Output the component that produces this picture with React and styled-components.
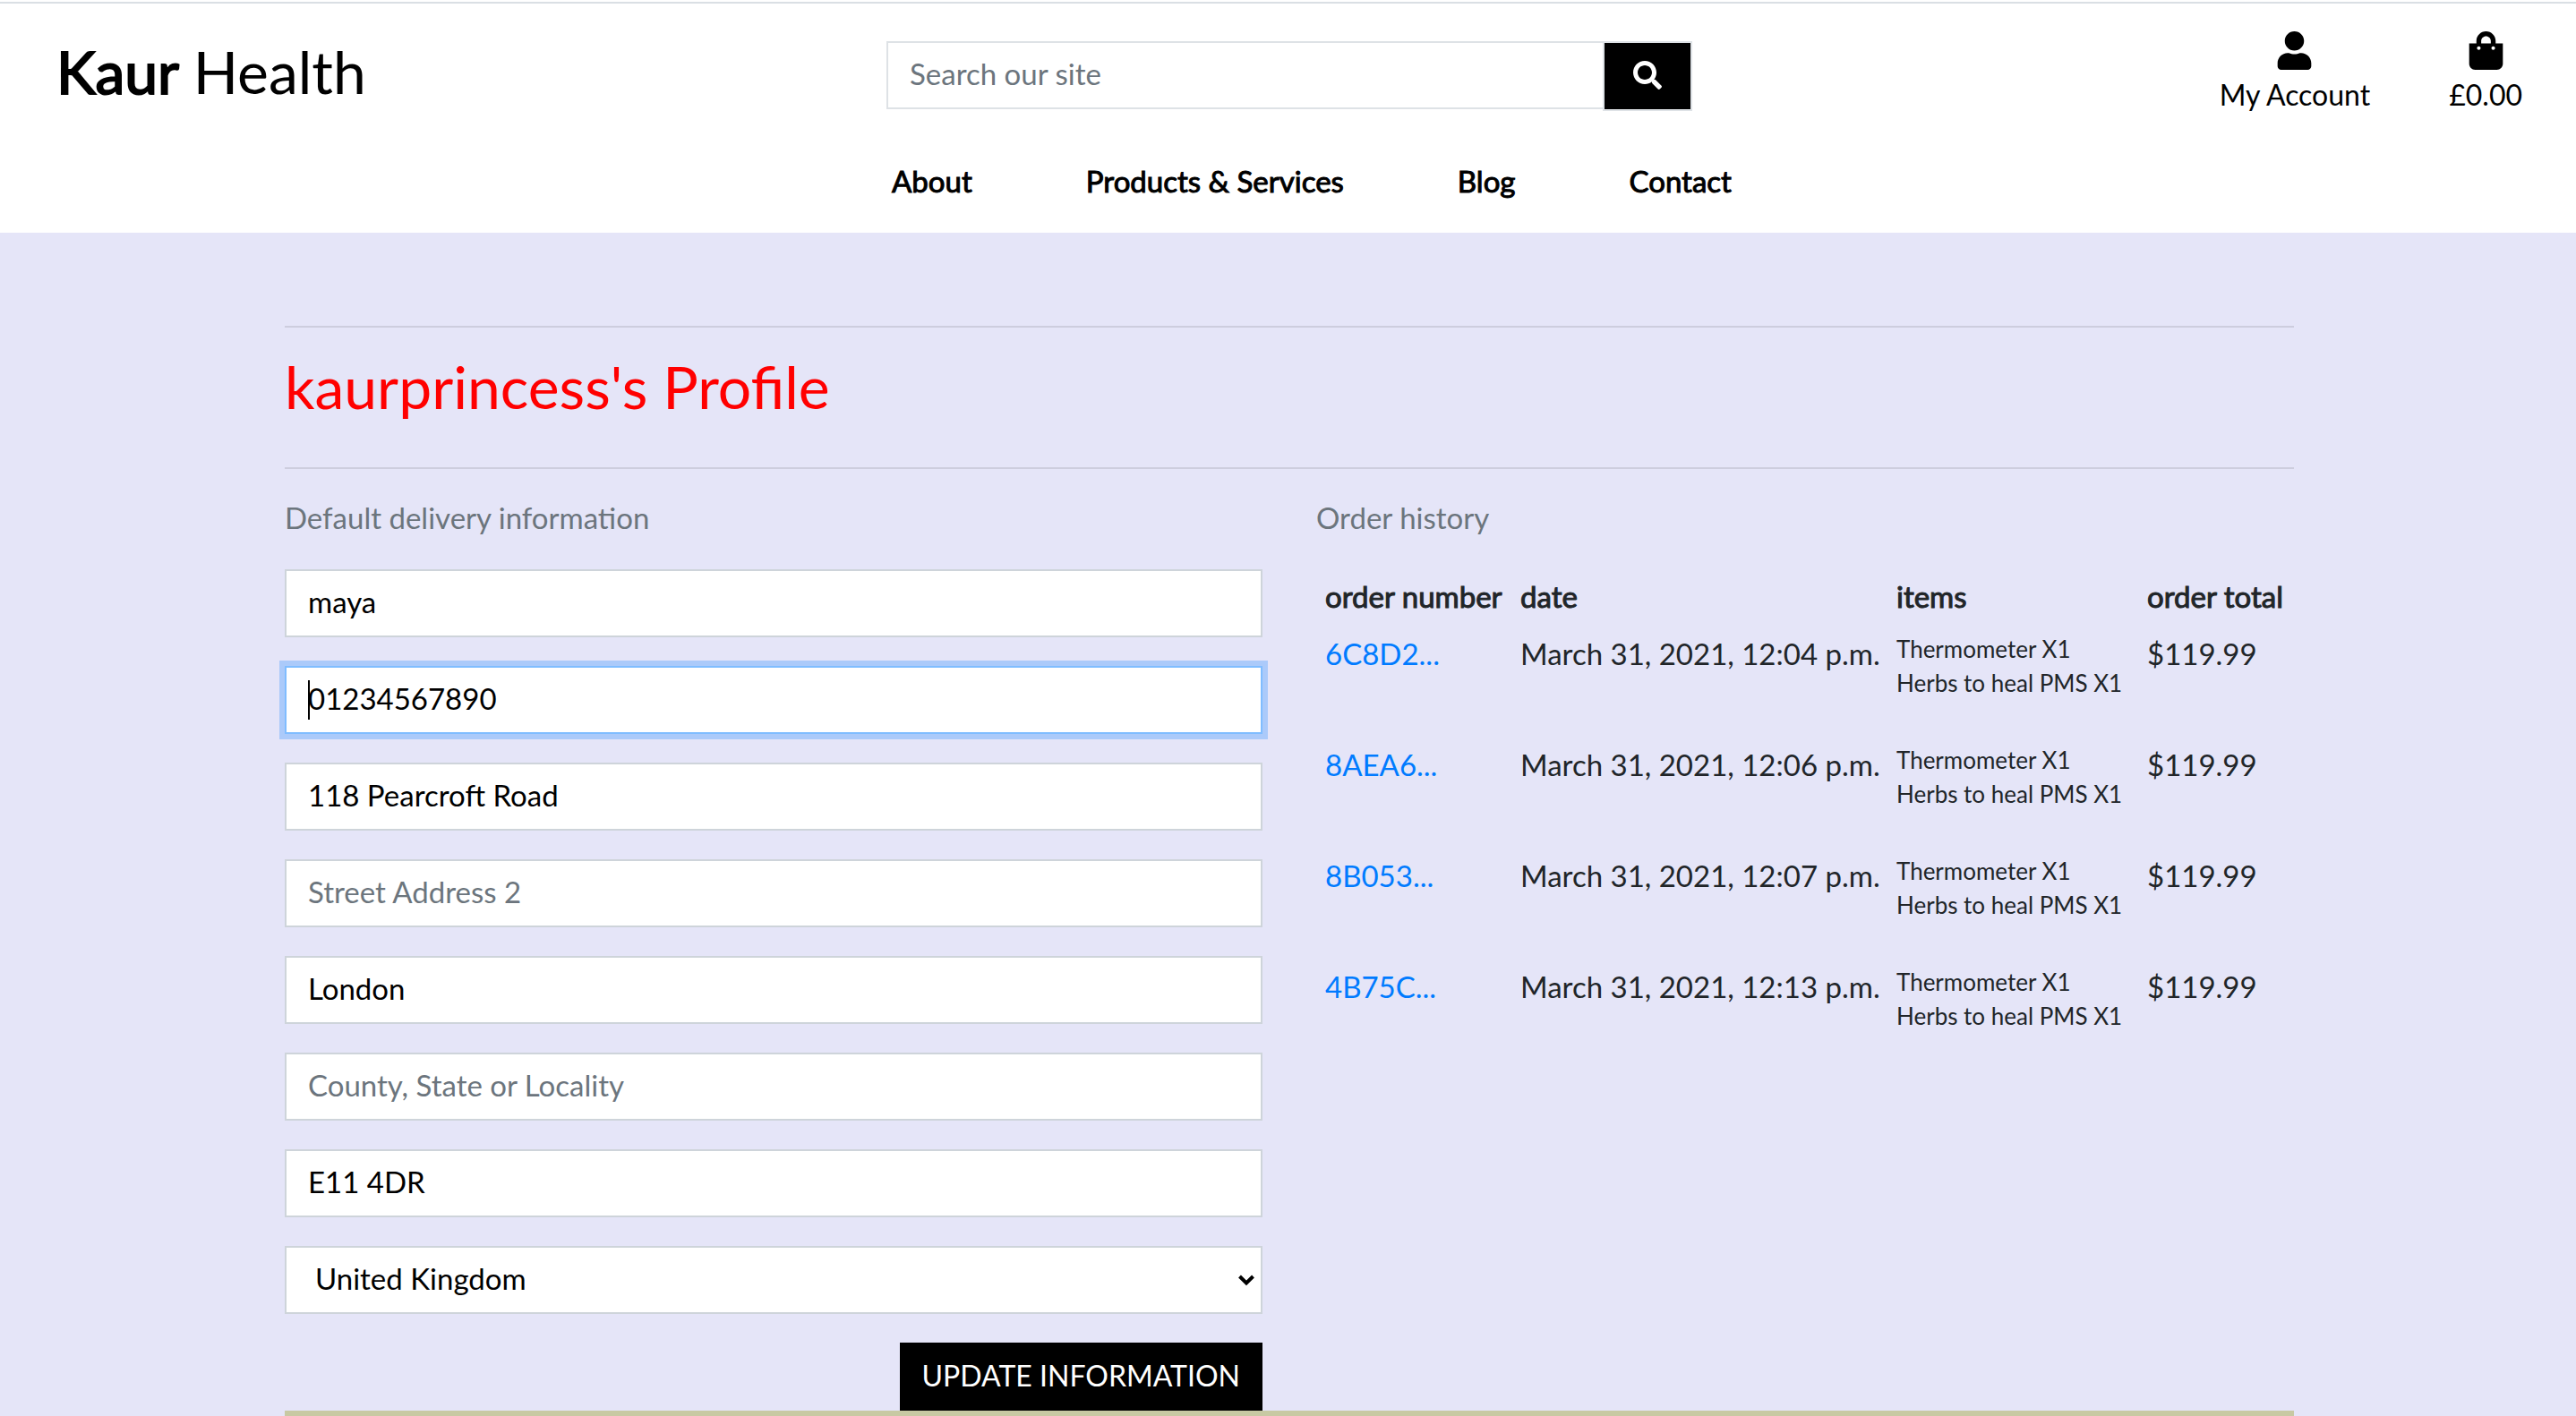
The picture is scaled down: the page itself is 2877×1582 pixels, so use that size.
import React from 'react';
import styled, { createGlobalStyle } from 'styled-components';
import { FaSearch, FaShoppingBag, FaUser } from 'react-icons/fa';

const GlobalStyle = createGlobalStyle`
  *, *::before, *::after { box-sizing: border-box; }
  html { background: #e5e5f8; }
  body {
    margin: 0;
    font-family: Lato, "Open Sans", sans-serif;
    font-size: 33px;
    line-height: 48px;
    color: #212529;
  }
  input, select, button { font: inherit; border-radius: 0; margin: 0; }
  a { text-decoration: none; }
`;

const Header = styled.header`
  margin-top: 2px;
  border-top: 2px solid #dadfe4;
  box-shadow: 0 -2px 0 #fff;
  background: #fff;
  padding: 31px 60px 34px 63px;
`;

const TopRow = styled.div`
  display: grid;
  grid-template-columns: 1fr 900px 1fr;
  align-items: start;
`;

const Brand = styled.a`
  color: #000;
  font-size: 66px;
  line-height: 90px;
`;

const BrandStrong = styled.strong`
  font-weight: 400;
  -webkit-text-stroke: 2px currentColor;
`;

const SearchForm = styled.form`
  display: flex;
  align-items: flex-start;
  margin-top: 11px;
`;

const SearchInput = styled.input`
  flex: 1;
  min-width: 0;
  height: 76px;
  padding: 0 24px 4px;
  border: 2px solid #dee2e6;
  border-right: 0;
  background: #fff;
  color: #000;
  outline: none;
  &::placeholder { color: #6c757d; opacity: 1; }
`;

const SearchButton = styled.button`
  display: flex;
  align-items: center;
  justify-content: center;
  width: 100px;
  height: 78px;
  padding: 0 0 2px;
  border: 2px solid #dee2e6;
  background: #000;
  color: #fff;
  font-size: 32px;
`;

const Shortcuts = styled.div`
  display: flex;
  justify-content: flex-end;
  gap: 88px;
`;

const Shortcut = styled.a`
  display: flex;
  flex-direction: column;
  align-items: center;
  gap: 4px;
  color: #000;
  font-size: 32px;
  svg { width: 43px; height: 43px; }
`;

const Nav = styled.nav`
  display: flex;
  justify-content: center;
  gap: 127px;
  margin-top: 48px;
  padding-left: 50px;
`;

const NavLink = styled.a`
  color: #000;
  -webkit-text-stroke: 1px currentColor;
`;

const Main = styled.main`
  padding: 104px 315px 0 318px;
`;

const Rule = styled.hr`
  height: 2px;
  margin: 0;
  border: 0;
  background: rgba(0, 0, 0, 0.1);
`;

const Title = styled.h1`
  margin: 34px 0 58px;
  color: #f00;
  font-size: 66px;
  font-weight: 400;
  line-height: 64px;
`;

const Columns = styled.div`
  display: grid;
  grid-template-columns: 1fr 1fr;
  gap: 60px;
`;

const SectionTitle = styled.h2`
  margin: 30px 0 34px;
  color: #6c757d;
  font-size: 33px;
  font-weight: 400;
`;

const Form = styled.form`
  display: flex;
  flex-direction: column;
  gap: 32px;
`;

const Field = styled.div`
  position: relative;
  display: flex;
`;

const TextInput = styled.input`
  width: 100%;
  height: 76px;
  padding: 0 24px 4px;
  border: 2px solid ${(p) => (p.$active ? '#80bdff' : '#ced4da')};
  box-shadow: ${(p) => (p.$active ? '0 0 0 6px rgba(0, 123, 255, 0.25)' : 'none')};
  background: #fff;
  color: #000;
  outline: none;
  &::placeholder { color: #6c757d; opacity: 1; }
`;

const Caret = styled.span`
  position: absolute;
  left: 26px;
  top: 16px;
  width: 2px;
  height: 44px;
  background: #000;
`;

const Select = styled.select`
  appearance: none;
  width: 100%;
  height: 76px;
  padding: 0 32px 4px;
  border: 2px solid #ced4da;
  background: #fff;
  color: #000;
  outline: none;
`;

const Chevron = styled.svg`
  position: absolute;
  right: 8px;
  top: 31px;
  width: 20px;
  height: 15px;
  pointer-events: none;
`;

const SubmitButton = styled.button`
  align-self: flex-end;
  height: 76px;
  padding: 0 23px 2px;
  border: 2px solid #000;
  background: #000;
  color: #fff;
  font-size: 32px;
  text-transform: uppercase;
`;

const Table = styled.table`
  width: 100%;
  table-layout: fixed;
  border-collapse: collapse;
`;

const Col = styled.col`
  width: ${(p) => p.$width};
`;

const HeadCell = styled.th`
  padding: 6px 0 10px 10px;
  font-weight: 400;
  text-align: left;
  white-space: nowrap;
  -webkit-text-stroke: 1px currentColor;
`;

const Cell = styled.td`
  padding: 6px 0 10px 10px;
  vertical-align: top;
  white-space: nowrap;
`;

const OrderLink = styled.a`
  color: #007bff;
`;

const ItemList = styled.ul`
  margin: 0 0 32px;
  padding: 0;
  list-style: none;
  font-size: 26px;
  line-height: 38px;
`;

const FooterBar = styled.footer`
  height: 6px;
  background: #c8c9a3;
`;

const navItems = ['About', 'Products & Services', 'Blog', 'Contact'];

const fields = [
  { name: 'full_name', label: 'Full Name', value: 'maya' },
  { name: 'phone', label: 'Phone Number', value: '01234567890', active: true },
  { name: 'street1', label: 'Street Address 1', value: '118 Pearcroft Road' },
  { name: 'street2', label: 'Street Address 2', value: '' },
  { name: 'town', label: 'Town or City', value: 'London' },
  { name: 'county', label: 'County, State or Locality', value: '' },
  { name: 'postcode', label: 'Postal Code', value: 'E11 4DR' },
];

const items = ['Thermometer X1', 'Herbs to heal PMS X1'];

const orders = [
  { number: '6C8D2...', date: 'March 31, 2021, 12:04 p.m.', items, total: '$119.99' },
  { number: '8AEA6...', date: 'March 31, 2021, 12:06 p.m.', items, total: '$119.99' },
  { number: '8B053...', date: 'March 31, 2021, 12:07 p.m.', items, total: '$119.99' },
  { number: '4B75C...', date: 'March 31, 2021, 12:13 p.m.', items, total: '$119.99' },
];

const stop = (e) => e.preventDefault();

function SiteHeader() {
  return (
    <Header>
      <TopRow>
        <Brand href="#home">
          <BrandStrong>Kaur</BrandStrong> Health
        </Brand>
        <SearchForm role="search" onSubmit={stop}>
          <SearchInput type="text" name="q" placeholder="Search our site" aria-label="Search our site" />
          <SearchButton type="submit" aria-label="Search">
            <FaSearch />
          </SearchButton>
        </SearchForm>
        <Shortcuts>
          <Shortcut href="#account">
            <FaUser />
            My Account
          </Shortcut>
          <Shortcut href="#bag">
            <FaShoppingBag />
            £0.00
          </Shortcut>
        </Shortcuts>
      </TopRow>
      <Nav>
        {navItems.map((item) => (
          <NavLink key={item} href="#nav">{item}</NavLink>
        ))}
      </Nav>
    </Header>
  );
}

function DeliveryForm() {
  return (
    <section>
      <SectionTitle>Default delivery information</SectionTitle>
      <Form onSubmit={stop}>
        {fields.map((f) => (
          <Field key={f.name}>
            <TextInput
              type="text"
              name={f.name}
              aria-label={f.label}
              placeholder={f.label}
              defaultValue={f.value}
              $active={f.active}
            />
            {f.active && <Caret />}
          </Field>
        ))}
        <Field>
          <Select name="country" aria-label="Country" defaultValue="GB">
            <option value="GB">United Kingdom</option>
          </Select>
          <Chevron viewBox="0 0 20 15" aria-hidden="true">
            <path d="M2.5 3L10 10.5L17.5 3" fill="none" stroke="#000" strokeWidth="4" />
          </Chevron>
        </Field>
        <SubmitButton type="submit">Update Information</SubmitButton>
      </Form>
    </section>
  );
}

function OrderHistory() {
  return (
    <section>
      <SectionTitle>Order history</SectionTitle>
      <Table>
        <colgroup>
          <Col $width="218px" />
          <Col $width="420px" />
          <Col $width="280px" />
          <Col $width="auto" />
        </colgroup>
        <thead>
          <tr>
            <HeadCell scope="col">order number</HeadCell>
            <HeadCell scope="col">date</HeadCell>
            <HeadCell scope="col">items</HeadCell>
            <HeadCell scope="col">order total</HeadCell>
          </tr>
        </thead>
        <tbody>
          {orders.map((o) => (
            <tr key={o.number}>
              <Cell><OrderLink href="#order">{o.number}</OrderLink></Cell>
              <Cell>{o.date}</Cell>
              <Cell>
                <ItemList>
                  {o.items.map((i) => <li key={i}>{i}</li>)}
                </ItemList>
              </Cell>
              <Cell>{o.total}</Cell>
            </tr>
          ))}
        </tbody>
      </Table>
    </section>
  );
}

export default function App() {
  return (
    <>
      <GlobalStyle />
      <SiteHeader />
      <Main>
        <Rule />
        <Title>kaurprincess's Profile</Title>
        <Rule />
        <Columns>
          <DeliveryForm />
          <OrderHistory />
        </Columns>
        <FooterBar />
      </Main>
    </>
  );
}
